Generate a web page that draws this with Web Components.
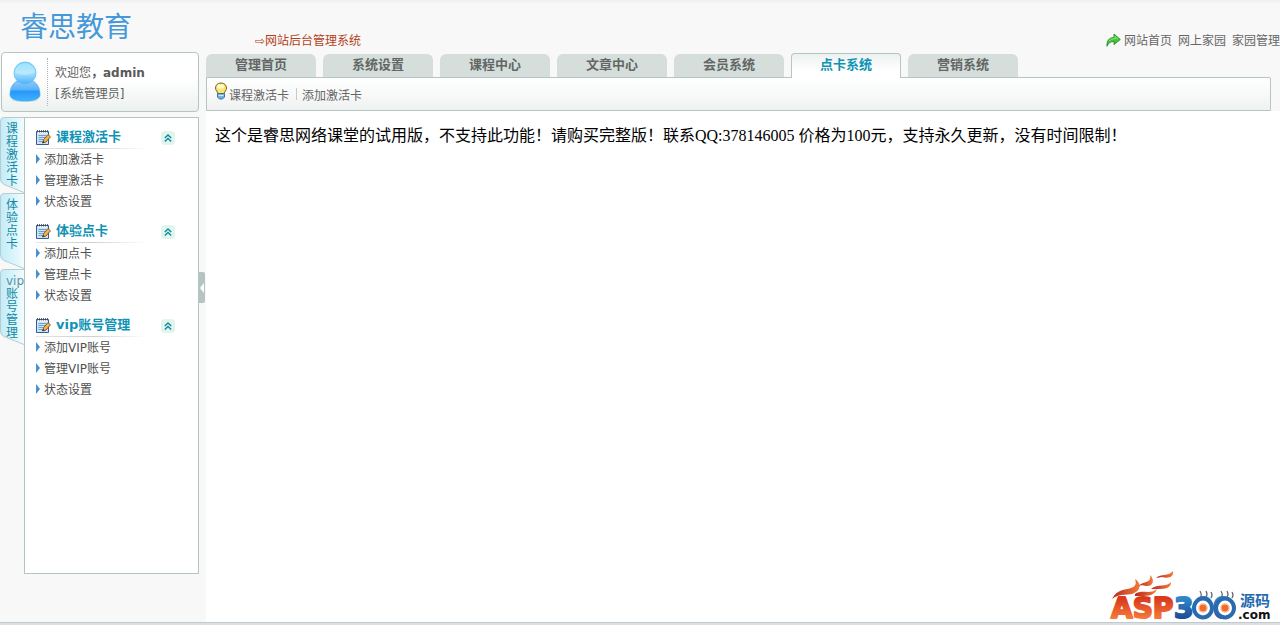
<!DOCTYPE html>
<html lang="zh-CN">
<head>
<meta charset="utf-8">
<title>网站后台管理系统</title>
<style>
html, body { margin: 0; }
body {
  font: 12px/16px "DejaVu Sans", "Noto Sans CJK SC", sans-serif;
  color: #606060;
  background: #f8f8f8;
  --line: #b4c5c5;
  --accent: #0f93b4;
}
</style>
</head>
<body>
<admin-app></admin-app>
<script>
function define(name, html, setup) {
  const tpl = document.createElement('template');
  tpl.innerHTML = html;
  customElements.define(name, class extends HTMLElement {
    connectedCallback() {
      if (this.shadowRoot) return;
      const root = this.attachShadow({ mode: 'open' });
      root.append(tpl.content.cloneNode(true));
      if (setup) setup(this, root);
    }
  });
}

define('user-card', `
<style>
:host { display: flex; align-items: center; box-sizing: border-box; height: 60px; margin-left: 1px; border: 1px solid var(--line); border-radius: 4px; background: linear-gradient(#fff 30%, #fdfefd 50%, #ecf1ee); }
svg { width: 32px; height: 42px; margin: 0 6px 0 7px; flex: none; }
.who { border-left: 1px dotted #a9b5b5; height: 48px; box-sizing: border-box; padding: 2px 0 0 7px; display: flex; flex-direction: column; justify-content: center; gap: 5px; }
p { margin: 0; white-space: nowrap; }
b { color: #5a5a5a; }
</style>
<svg viewBox="0 0 32 42" aria-hidden="true">
  <defs>
    <linearGradient id="h" x2="0" y2="1"><stop offset="0" stop-color="#76d8fb"/><stop offset=".5" stop-color="#a5e2fd"/><stop offset="1" stop-color="#4fb0fb"/></linearGradient>
    <linearGradient id="b" x2="0" y2="1"><stop offset="0" stop-color="#8bcafc"/><stop offset=".45" stop-color="#5ab2fb"/><stop offset=".5" stop-color="#2796fb"/><stop offset="1" stop-color="#3cb3fe"/></linearGradient>
  </defs>
  <ellipse cx="16" cy="39" rx="13" ry="2" fill="#d5dede"/>
  <path d="M8 20C3 23 1 28 1 34C1 38 8 40 16 40S31 38 31 34C31 28 29 23 24 20Z" fill="url(#b)" stroke="#4aa5ee" stroke-width=".7"/>
  <circle cx="16" cy="12" r="11" fill="url(#h)" stroke="#62baf2" stroke-width=".8"/>
  <path d="M6 11a10 9 0 0 1 20 0q-10 6-20 0" fill="#fff" opacity=".25"/>
</svg>
<div class="who"><p>欢迎您<b>，admin</b></p><p>[系统管理员]</p></div>`);

define('rail-tab', `
<style>
:host { display: block; height: 76px; }
a { position: relative; display: block; height: 100%; box-sizing: border-box; padding: 6px 0 0 6px; color: #1489a4; text-decoration: none; font-size: 12px; line-height: 13px; }
svg { position: absolute; inset: 0; width: 24px; height: 76px; }
span { position: relative; display: block; width: 13px; word-break: break-all; }
::slotted(i) { font-style: normal; color: #5d8fa5; display: block; line-height: 13px; white-space: nowrap; word-break: keep-all; }
</style>
<a href="#"><svg viewBox="0 0 24 76" aria-hidden="true">
<defs><linearGradient id="g" x1="0" x2="1"><stop offset="0" stop-color="#c3ecf8"/><stop offset=".6" stop-color="#dbf5fb"/><stop offset="1" stop-color="#f4fcfd"/></linearGradient></defs>
<path d="M24 .5H4Q.5.5.5 4V62Q.5 66 4 67.500L24 75.500" fill="url(#g)" stroke="#b4cdd2"/></svg><span><slot></slot></span></a>`);

define('menu-group', `
<style>
:host { display: block; }
header { display: flex; align-items: center; height: 22px; }
header svg { width: 15px; height: 16px; margin-right: 5px; flex: none; }
h2 { margin: 0; font-size: 13px; line-height: 16px; color: var(--accent); flex: 1; white-space: nowrap; }
button { width: 14px; height: 14px; padding: 0; border: 0; border-radius: 4px; background: #e0f5ee; display: flex; align-items: center; justify-content: center; margin-top: 2px; }
header button svg { width: 8px; height: 8px; margin: 0; }
.rule { height: 1px; width: 110px; background: linear-gradient(90deg, #e3e6e6, #c9d1d1 50%, #fff); }
ul { margin: 0; padding: 0; list-style: none; }
ul[hidden] { display: none; }
</style>
<header>
<svg viewBox="0 0 15 16" aria-hidden="true">
 <path d="M.5 2.500H12.500V15.500H.5Z" fill="#cfe3f8" stroke="#2f5f9c"/>
 <path d="M1 3h11v1.500H1z" fill="#f4f9fd"/>
 <path d="M1.500 1v2.500M3.500 1v2.500M5.500 1v2.500M7.500 1v2.500M9.500 1v2.500M11.500 1v2.500" stroke="#444" stroke-width=".8"/>
 <path d="M2.500 6.500h8M2.500 8.500h7M2.500 10.500h5M2.500 12.500h4" stroke="#6f9fd0"/>
 <path d="M6.500 14L7.500 10.800L12 5.500L14.500 7.800L10 13Z" fill="#f7b344" stroke="#67421b" stroke-width=".8"/>
 <path d="M6.500 14l.6-2 1.500 1.300z" fill="#222"/>
</svg>
<h2></h2>
<button type="button" aria-label="折叠"><svg viewBox="0 0 8 8" fill="none" stroke="#168a9b" stroke-width="1.400"><path d="M.8 4L4 1L7.200 4M.8 7.500L4 4.500L7.200 7.500"/></svg></button>
</header>
<div class="rule"></div>
<ul><slot></slot></ul>`, (el, root) => {
  root.querySelector('h2').textContent = el.getAttribute('heading');
  const list = root.querySelector('ul');
  root.querySelector('button').onclick = () => { list.hidden = !list.hidden; };
});

define('menu-item', `
<style>
:host { display: block; }
a { display: flex; align-items: center; height: 21px; color: #505050; text-decoration: none; white-space: nowrap; }
a::before { content: ""; border: 5px solid transparent; border-left: 4px solid #4591ce; border-right-width: 0; margin: 0 4px 2px 0; }
</style><a href="#"><slot></slot></a>`);

define('nav-tab', `
<style>
:host { display: block; flex: 0 1 110px; height: 23px; position: relative; }
a { display: block; box-sizing: border-box; height: 100%; border-radius: 6px 6px 0 0; background: #d5dedb; color: #626665; font-weight: bold; font-size: 13px; line-height: 22px; text-align: center; text-decoration: none; white-space: nowrap; }
:host([active]) { height: 25px; }
:host([active]) a { border: 1px solid var(--line); border-bottom: 0; border-radius: 4px 4px 0 0; background: linear-gradient(#eef1f1, #fff 70%); color: var(--accent); }
</style><a href="#"><slot></slot></a>`);

define('tool-bar', `
<style>
:host { display: flex; align-items: center; box-sizing: border-box; height: 34px; border: 1px solid var(--line); border-radius: 0 2px 0 0; padding-left: 7px; background: linear-gradient(#fff, #f0f2f2); }
svg { width: 14px; height: 18px; margin: 0 1px 6px 0; flex: none; }
a { color: #666; text-decoration: none; white-space: nowrap; margin-top: 4px; }
a + a::before { content: ""; display: inline-block; width: 1px; height: 12px; background: #c5cbcb; margin: 0 5px 0 7px; }
</style>
<svg viewBox="0 0 14 18" aria-hidden="true">
 <path d="M7 1C3.500 1 1.500 3.300 1.500 6C1.500 8.500 3.500 9.500 4 11.500H10C10.500 9.500 12.500 8.500 12.500 6C12.500 3.300 10.500 1 7 1Z" fill="#fbe66d" stroke="#7b6220"/>
 <ellipse cx="6.500" cy="4.500" rx="3.500" ry="2.200" fill="#fffbd0"/>
 <path d="M3.500 11.500H10.500V15L8.500 17H5.500L3.500 15Z" fill="#74b2dd" stroke="#3f6f9c"/>
 <path d="M4.500 13.500h5" stroke="#d2ebfa"/>
</svg><a href="#">课程激活卡</a><a href="#">添加激活卡</a>`);

define('top-bar', `
<style>
:host { display: flex; align-items: center; height: 16px; padding: 33px 0 4px 49px; }
h1 { margin: 0; font-size: 12px; line-height: 16px; font-weight: normal; color: #b5401a; flex: 1; white-space: nowrap; }
nav { display: flex; gap: 6px; }
a { color: #666; text-decoration: none; white-space: nowrap; }
svg { width: 15px; height: 14px; margin-right: 3px; margin-bottom: 3px; }
</style>
<h1>⇨网站后台管理系统</h1>
<svg viewBox="0 0 15 14" aria-hidden="true"><path d="M1 13.300C.5 8 3 4.500 8 4.500V1L14.300 6.500L8 11.500V8.500C4.500 8.300 2.500 10 1 13.300Z" fill="#41c436" stroke="#268b2b" stroke-width=".9"/><path d="M3 8q2-2.500 6-2.300V3.500l3 2.800" fill="none" stroke="#9aea84" stroke-width=".9"/></svg>
<nav><a href="#">网站首页</a><a href="#">网上家园</a><a href="#">家园管理</a></nav>`);

define('source-logo', `
<style>
:host { display: block; width: 162px; height: 52px; }
svg { display: block; width: 100%; height: 100%; overflow: visible; }
text { font-family: "DejaVu Sans", sans-serif; font-weight: bold; font-size: 28px; }
.heavy { stroke-width: 2; stroke-linejoin: round; }
.cn { font-family: "Noto Sans CJK SC", sans-serif; font-size: 15px; }
.com { font-size: 12px; }
</style>
<svg viewBox="0 0 162 52" role="img" aria-label="ASP300源码.com">
 <defs>
 <linearGradient id="r" x2="0" y2="1"><stop offset=".2" stop-color="#d93a1e"/><stop offset=".8" stop-color="#f5793a"/></linearGradient>
 <linearGradient id="u" x2="0" y2="1"><stop offset=".2" stop-color="#2f86c8"/><stop offset=".8" stop-color="#1d4c98"/></linearGradient>
 <linearGradient id="f"><stop offset="0" stop-color="#b72921"/><stop offset="1" stop-color="#f57b35"/></linearGradient>
 </defs>
 <text class="heavy" x="1" y="48" fill="url(#r)" stroke="url(#r)">ASP</text>
 <text class="heavy" x="64" y="48" fill="url(#u)" stroke="url(#u)">300</text>
 <g fill="url(#f)">
 <path d="M2 29C7 19 15 20 21 18C27 16 26 12 25 9C31 13 31 19 26 22C19 27 10 22 2 29Z"/>
 <path d="M25 24C32 19 40 25 47 19C44 27 35 26 25 26Z"/>
 <path d="M28 16C34 11 42 13 40 5C46 11 42 17 36 16C33 15 31 15 28 16Z"/>
 <path d="M46 8C51 3 58 7 63 1C64 9 56 8 52 7C50 7 48 8 46 8Z"/>
 <path d="M41 19C48 13 56 18 61 12C61 20 52 19 41 19Z"/>
 </g>
 <g fill="#fff" stroke="#286bb0" stroke-width="4"><ellipse cx="93" cy="38" rx="9" ry="9.500"/><ellipse cx="115" cy="38" rx="9" ry="9.500"/></g>
 <g fill="#ef6a2d" stroke="#f9b88c" stroke-width="1.500"><circle cx="93" cy="38" r="4"/><circle cx="115" cy="38" r="4"/></g>
 <path d="M91 27q1-3-1-6M96 27q2-3 0-6M101 28q2-3 0-6M112 27q1-3-1-6M117 27q2-3 0-6M122 28q2-3 0-6" fill="none" stroke="#667" stroke-width="1.300"/>
 <text class="cn" x="130" y="36" fill="#2468ae">源码</text>
 <text class="com" x="128" y="49" fill="#111">.com</text>
</svg>`);

define('side-bar', `
<style>
:host { display: flex; flex-direction: column; width: 199px; padding-right: 7px; position: relative; }
.brand { height: 52px; box-sizing: border-box; padding: 12px 0 0 20px; font: 28px/32px "Liberation Serif", "Noto Sans CJK SC", serif; color: #4699d9; }
.body { display: flex; flex: 1; margin: 5px 0 48px; }
.rail { width: 24px; flex: none; }
.panel { flex: 1; box-sizing: border-box; border: 1px solid var(--line); background: #fff; padding: 8px 23px 20px 11px; display: flex; flex-direction: column; gap: 8px; }
.grip { position: absolute; right: 1px; top: 272px; width: 7px; height: 31px; padding: 0; border: 0; border-radius: 0 2px 2px 0; background: #b4c4c3; display: flex; align-items: center; justify-content: center; }
.grip::before { content: ""; border: 5px solid transparent; border-right: 4px solid #fff; border-left-width: 0; }
</style>
<div class="brand">睿思教育</div>
<user-card></user-card>
<div class="body">
 <nav class="rail"><rail-tab>课程激活卡</rail-tab><rail-tab>体验点卡</rail-tab><rail-tab><i>vip</i>账号管理</rail-tab></nav>
 <div class="panel">
  <menu-group heading="课程激活卡"><li><menu-item>添加激活卡</menu-item></li><li><menu-item>管理激活卡</menu-item></li><li><menu-item>状态设置</menu-item></li></menu-group>
  <menu-group heading="体验点卡"><li><menu-item>添加点卡</menu-item></li><li><menu-item>管理点卡</menu-item></li><li><menu-item>状态设置</menu-item></li></menu-group>
  <menu-group heading="vip账号管理"><li><menu-item>添加VIP账号</menu-item></li><li><menu-item>管理VIP账号</menu-item></li><li><menu-item>状态设置</menu-item></li></menu-group>
 </div>
</div>
<button class="grip" type="button" aria-label="收起侧栏"></button>`);

define('admin-app', `
<style>
:host { display: flex; flex-direction: column; min-height: 100vh; background: linear-gradient(#eceff1, #f8f8f8 4px); }
.cols { display: flex; flex: 1; }
.main { flex: 1; min-width: 0; display: flex; flex-direction: column; }
.tabs { display: flex; gap: 7px; height: 24px; align-items: flex-end; }
.tabs nav-tab[active] { z-index: 1; margin-bottom: -1px; }
tool-bar { margin-right: 9px; }
main { flex: 1; background: #fff; display: flex; flex-direction: column; padding: 15px 8px 0 9px; }
p { margin: 0; font: 16px/20px "Liberation Serif", "Noto Sans CJK SC", serif; color: #000; }
source-logo { margin: auto 0 0 auto; }
footer { height: 2px; background: #d9e0e4; border-top: 1px solid #c2cacd; }
</style>
<div class="cols">
<side-bar></side-bar>
<div class="main">
 <top-bar></top-bar>
 <nav class="tabs"><nav-tab>管理首页</nav-tab><nav-tab>系统设置</nav-tab><nav-tab>课程中心</nav-tab><nav-tab>文章中心</nav-tab><nav-tab>会员系统</nav-tab><nav-tab active>点卡系统</nav-tab><nav-tab>营销系统</nav-tab></nav>
 <tool-bar></tool-bar>
 <main><p>这个是睿思网络课堂的试用版，不支持此功能！请购买完整版！联系QQ:378146005 价格为100元，支持永久更新，没有时间限制！</p><source-logo></source-logo></main>
</div>
</div>
<footer></footer>`);
</script>
</body>
</html>
